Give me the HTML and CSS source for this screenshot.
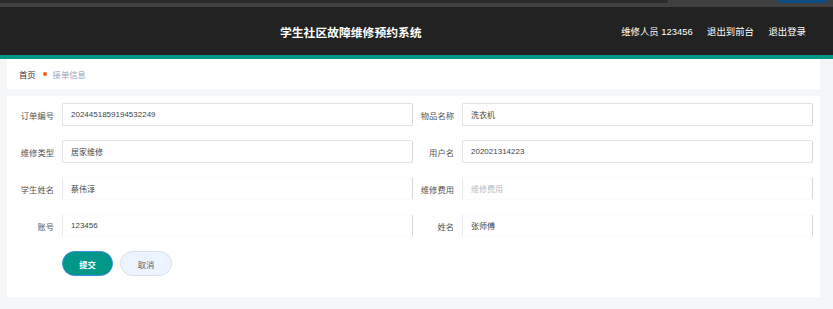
FILE: index.html
```html
<!DOCTYPE html>
<html lang="zh">
<head>
<meta charset="utf-8">
<title>学生社区故障维修预约系统</title>
<link rel="stylesheet" href="styles.css">
</head>
<body>
<div class="chrome">
  <div class="chrome-bar"></div>
  <div class="chrome-pill"></div>
</div>
<header class="header">
  <div class="title">学生社区故障维修预约系统</div>
  <nav class="nav">
    <span>维修人员 123456</span>
    <span>退出到前台</span>
    <span>退出登录</span>
  </nav>
</header>
<div class="accent"></div>
<main class="main">
  <div class="crumbs">
    <span class="crumb-home">首页</span>
    <span class="crumb-dot"></span>
    <span class="crumb-cur">接单信息</span>
  </div>
  <section class="card">
    <form class="form">
      <div class="field"><label class="label">订单编号</label><div class="input">2024451859194532249</div></div>
      <div class="field"><label class="label">物品名称</label><div class="input">洗衣机</div></div>
      <div class="field"><label class="label">维修类型</label><div class="input">居家维修</div></div>
      <div class="field"><label class="label">用户名</label><div class="input">202021314223</div></div>
      <div class="field"><label class="label">学生姓名</label><div class="input input-soft">蔡伟淳</div></div>
      <div class="field"><label class="label">维修费用</label><div class="input input-soft placeholder">维修费用</div></div>
      <div class="field"><label class="label">账号</label><div class="input input-soft">123456</div></div>
      <div class="field"><label class="label">姓名</label><div class="input input-soft">张师傅</div></div>
      <div class="actions">
        <button type="button" class="btn btn-primary">提交</button>
        <button type="button" class="btn btn-cancel">取消</button>
      </div>
    </form>
  </section>
</main>
</body>
</html>
```

FILE: styles.css
```css
* { box-sizing: border-box; }
html, body {
  margin: 0;
  padding: 0;
}
body {
  width: 833px;
  height: 309px;
  overflow: hidden;
  background: #f5f6f8;
  font-family: "Liberation Sans", "Noto Sans CJK SC", sans-serif;
  color: #333;
}
.chrome {
  height: 7px;
  background: #404040;
  display: flex;
  align-items: flex-start;
}
.chrome-bar {
  width: 668px;
  height: 3px;
  background: #2b2b2b;
  border-bottom-right-radius: 3px;
}
.chrome-pill {
  width: 50px;
  height: 3px;
  margin-left: 110px;
  background: #0f4c81;
  border-bottom-left-radius: 3px;
  border-bottom-right-radius: 3px;
}
.header {
  height: 48px;
  background: #222222;
  display: flex;
  align-items: center;
  padding-left: 280px;
  padding-right: 27px;
  color: #fff;
}
.title {
  font-size: 11.8px;
  font-weight: bold;
  letter-spacing: 0;
}
.nav {
  margin-left: auto;
  display: flex;
  gap: 14.5px;
  font-size: 9.4px;
}
.accent {
  height: 4px;
  background: #009688;
}
.main {
  padding: 0 13px 0 7px;
}
.crumbs {
  height: 30px;
  background: #fff;
  display: flex;
  align-items: center;
  padding-left: 12px;
  font-size: 8.3px;
  margin-bottom: 7px;
}
.crumb-home { color: #333; }
.crumb-dot {
  width: 4px;
  height: 4px;
  border-radius: 50%;
  background: #ff5722;
  margin: 0 6px 0 7px;
}
.crumb-cur { color: #97a3bb; }
.card {
  background: #fff;
  padding: 7px 7px 21px 6px;
}
.form {
  display: grid;
  grid-template-columns: 400px 400px;
  row-gap: 14px;
}
.field {
  display: flex;
  align-items: center;
  height: 23px;
}
.label {
  width: 49px;
  padding-right: 8px;
  text-align: right;
  font-size: 8.3px;
  color: #555;
  white-space: nowrap;
}
.input {
  width: 351px;
  height: 23px;
  border: 1px solid #e2e2e6;
  border-right-color: #d6d6dc;
  border-radius: 2px;
  padding-left: 8px;
  display: flex;
  align-items: center;
  font-size: 8px;
  color: #444;
}
.input-soft {
  border-top-color: #fbfbfc;
  border-bottom-color: #fbfbfc;
  border-left-color: #e8e8ec;
}
.placeholder { color: #b9bcc4; }
.actions {
  grid-column: 1 / 3;
  padding-left: 49px;
  display: flex;
  gap: 7px;
}
.btn {
  height: 25px;
  width: 51px;
  border-radius: 13px;
  font-family: "Liberation Sans", "Noto Sans CJK SC", sans-serif;
  font-size: 8.3px;
  padding: 0;
  cursor: pointer;
}
.btn-primary {
  background: #009688;
  border: 1px solid #3a8ee6;
  color: #fff;
  font-weight: bold;
}
.btn-cancel {
  width: 52px;
  background: #ecf5ff;
  border: 1px solid #dcdfe6;
  color: #606266;
}
```
